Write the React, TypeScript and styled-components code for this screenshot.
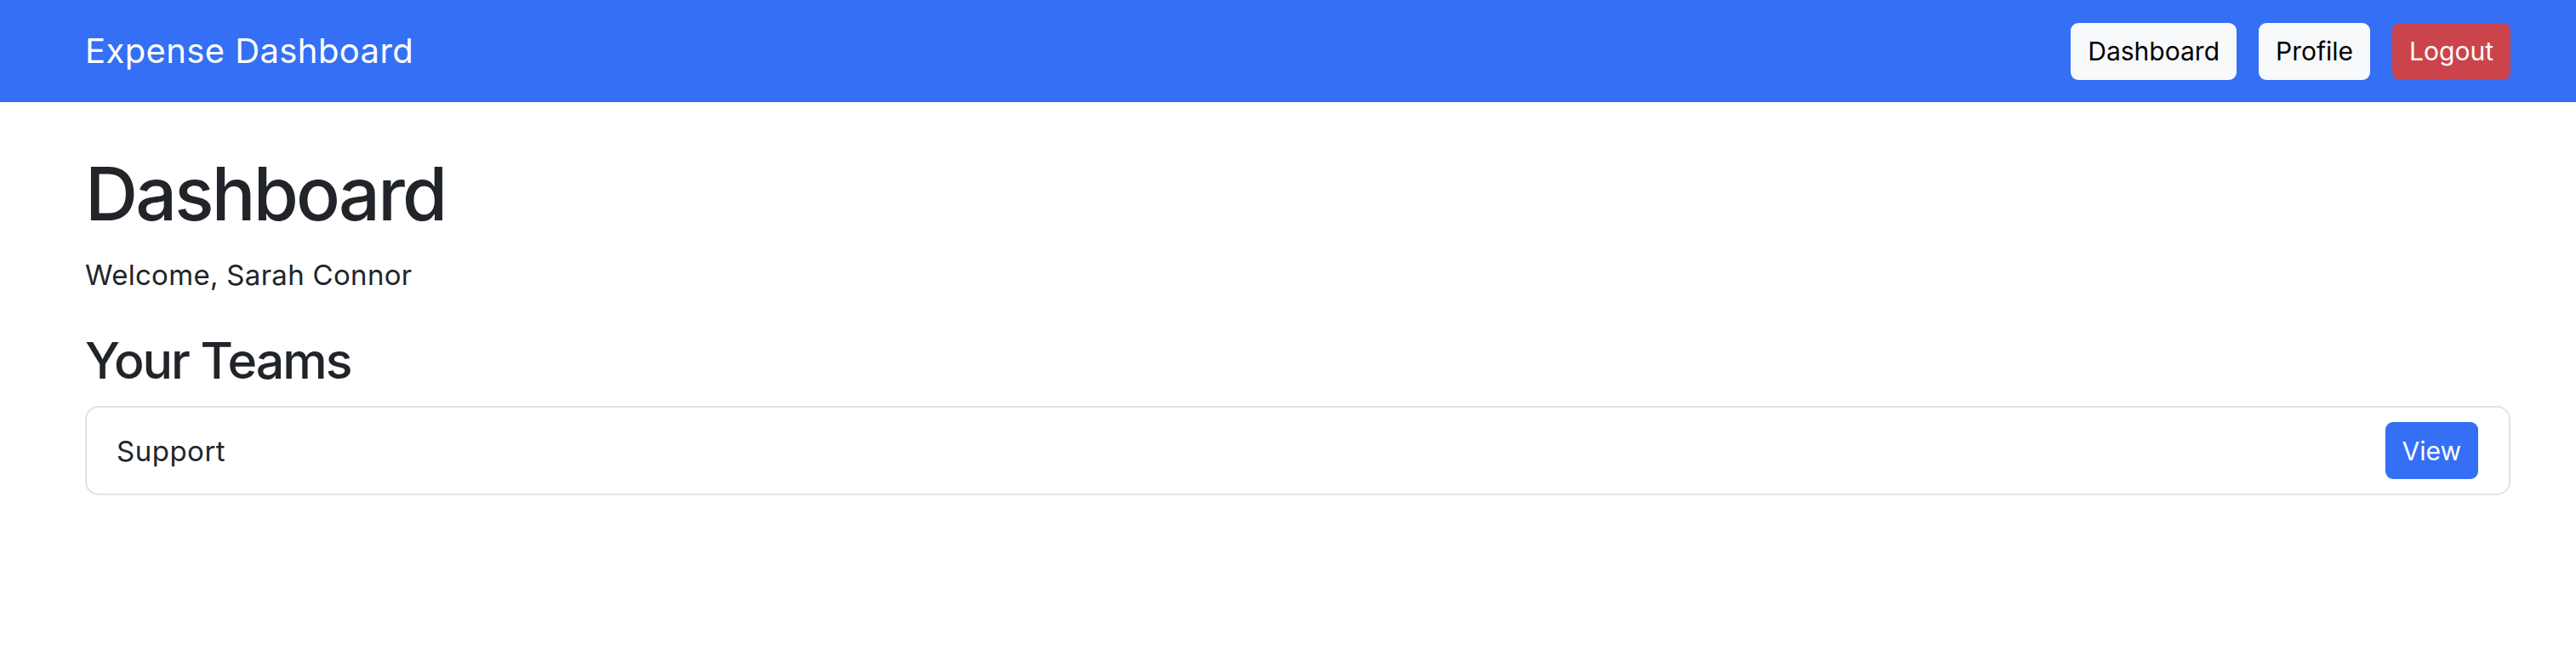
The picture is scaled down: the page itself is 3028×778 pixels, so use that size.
import styled, { createGlobalStyle } from 'styled-components';

const GlobalStyle = createGlobalStyle`
  * {
    box-sizing: border-box;
  }

  body {
    margin: 0;
    background: #ffffff;
    color: #212529;
    font-family: Inter, "Liberation Sans", Arial, sans-serif;
  }
`;

type Variant = 'light' | 'danger' | 'primary';

const teams = [{ id: 1, name: 'Support' }];

export default function App() {
  return (
    <>
      <GlobalStyle />
      <NavBar>
        <Brand>Expense Dashboard</Brand>
        <NavActions>
          <Button variant="light">Dashboard</Button>
          <Button variant="light">Profile</Button>
          <Button variant="danger">Logout</Button>
        </NavActions>
      </NavBar>
      <Main>
        <PageTitle>Dashboard</PageTitle>
        <Welcome>Welcome, Sarah Connor</Welcome>
        <SectionTitle>Your Teams</SectionTitle>
        <TeamList>
          {teams.map(team => (
            <TeamCard key={team.id}>
              <TeamName>{team.name}</TeamName>
              <Button variant="primary">View</Button>
            </TeamCard>
          ))}
        </TeamList>
      </Main>
    </>
  );
}

const NavBar = styled.nav`
  height: 120px;
  display: flex;
  align-items: center;
  justify-content: space-between;
  padding: 0 77px 0 100px;
  background: #346ff5;
`;

const Brand = styled.a`
  font-size: 40px;
  letter-spacing: 0.4px;
  color: #ffffff;
  text-decoration: none;
  line-height: 1.5;
`;

const NavActions = styled.div`
  display: flex;
  align-items: center;
  gap: 26px;
`;

const buttonColors: Record<Variant, { bg: string; fg: string }> = {
  light: { bg: '#f8f9fa', fg: '#000000' },
  danger: { bg: '#cb444b', fg: '#ffffff' },
  primary: { bg: '#346ff5', fg: '#ffffff' },
};

const Button = styled.button<{ variant: Variant }>`
  height: 67px;
  padding: 0 20px;
  border: none;
  border-radius: 9px;
  font-family: inherit;
  font-size: 30px;
  line-height: 1;
  cursor: pointer;
  background: ${props => buttonColors[props.variant].bg};
  color: ${props => buttonColors[props.variant].fg};
`;

const Main = styled.main`
  padding: 57px 77px 0 100px;
`;

const PageTitle = styled.h1`
  margin: 0;
  font-size: 86px;
  font-weight: 500;
  letter-spacing: -2.8px;
  line-height: 1.2;
`;

const Welcome = styled.p`
  margin: 19px 0 0;
  font-size: 33px;
  letter-spacing: 0.3px;
  line-height: 1.5;
`;

const SectionTitle = styled.h3`
  margin: 40px 0 0;
  font-size: 59px;
  font-weight: 500;
  letter-spacing: -2px;
  line-height: 1.2;
`;

const TeamList = styled.div`
  margin-top: 18px;
  display: flex;
  flex-direction: column;
  gap: 16px;
`;

const TeamCard = styled.div`
  display: flex;
  align-items: center;
  justify-content: space-between;
  padding: 17px 36px 17px 35px;
  border: 2px solid #dee2e6;
  border-radius: 16px;
`;

const TeamName = styled.span`
  font-size: 33px;
  letter-spacing: 0.5px;
`;
